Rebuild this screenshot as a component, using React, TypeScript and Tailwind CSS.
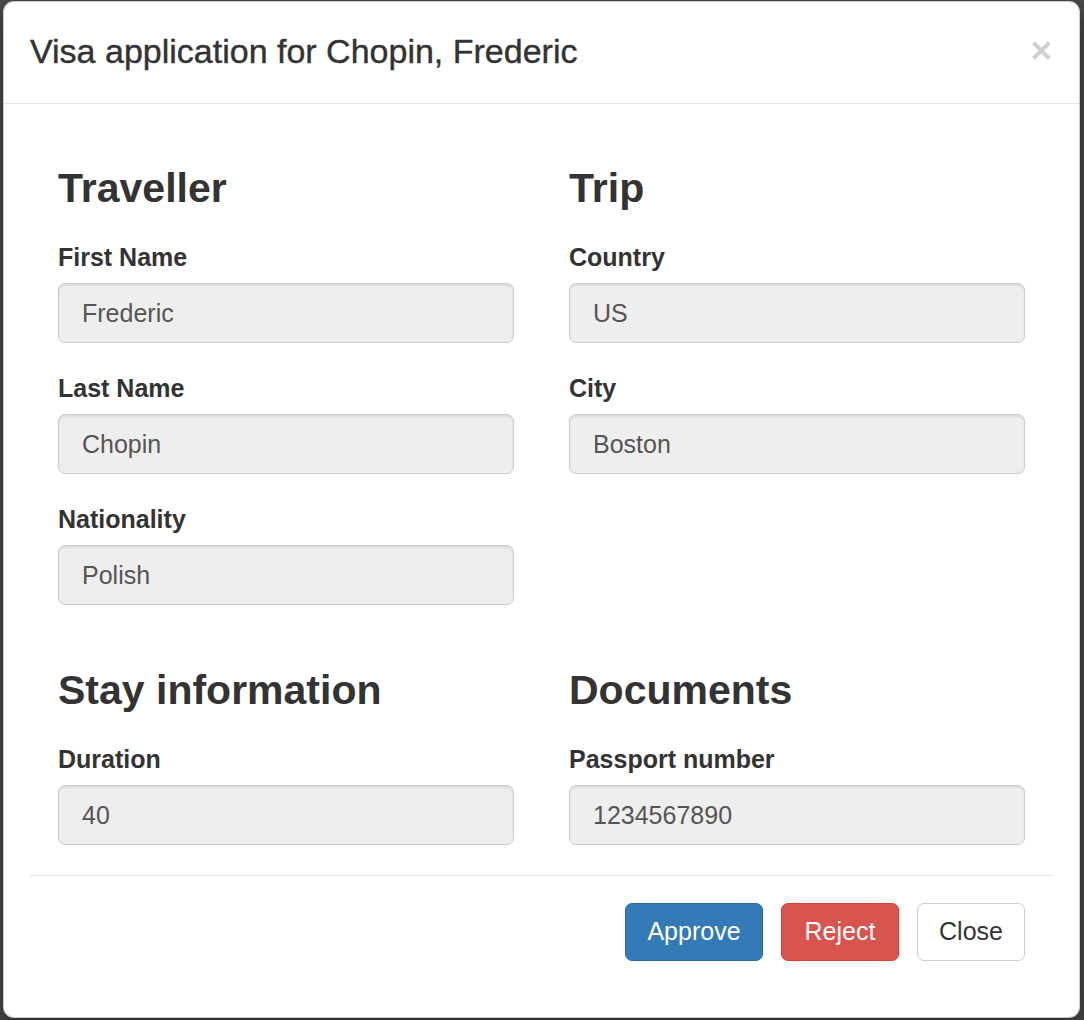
import React from 'react';

type Field = { label: string; value: string };

const sections: { title: string; fields: Field[] }[][] = [
  [
    {
      title: 'Traveller',
      fields: [
        { label: 'First Name', value: 'Frederic' },
        { label: 'Last Name', value: 'Chopin' },
        { label: 'Nationality', value: 'Polish' },
      ],
    },
    {
      title: 'Trip',
      fields: [
        { label: 'Country', value: 'US' },
        { label: 'City', value: 'Boston' },
      ],
    },
  ],
  [
    { title: 'Stay information', fields: [{ label: 'Duration', value: '40' }] },
    { title: 'Documents', fields: [{ label: 'Passport number', value: '1234567890' }] },
  ],
];

const FormField: React.FC<{ field: Field; last?: boolean }> = ({ field, last }) => (
  <div className={last ? 'mb-[30px]' : 'mb-[27px]'}>
    <label className="block mb-[8px] text-[25px] leading-[36px] font-bold text-[#333]">{field.label}</label>
    <input
      readOnly
      disabled
      value={field.value}
      className="block w-full h-[60px] pl-[23px] pr-[22px] text-[25px] text-[#555] bg-[#eee] border border-[#ccc] rounded-[7px] shadow-[inset_0_2px_2px_rgba(0,0,0,0.075)] outline-none"
    />
  </div>
);

const App: React.FC = () => {
  return (
    <div className="min-h-screen bg-[#4b4b4b] pt-[1px] pl-[3px] font-['Liberation_Sans',Arial,sans-serif]">
      <div className="w-[1077px] bg-white border border-black/20 rounded-[11px] shadow-[0_9px_27px_rgba(0,0,0,0.5)] overflow-hidden">
        {/* header */}
        <div className="flex items-start justify-between pt-[26px] pb-[29px] pl-[26px] pr-[27px] border-b border-[#e5e5e5]">
          <h4 className="text-[34px] leading-[46px] text-[#333] [-webkit-text-stroke:0.4px_#333]">
            Visa application for Chopin, Frederic
          </h4>
          <button className="text-[37px] leading-[46px] font-bold text-black/20">×</button>
        </div>

        {/* body */}
        <div className="px-[26px] pb-[27px]">
          <div className="px-[28px]">
            {sections.map((row, ri) => (
              <div key={ri} className={`grid grid-cols-2 gap-x-[55px] ${ri === 0 ? 'pt-[62px]' : 'pt-[36px]'}`}>
                {row.map((sec) => (
                  <div key={sec.title}>
                    <h3 className="text-[41px] leading-[45px] font-bold text-[#333] mb-[28px]">{sec.title}</h3>
                    {sec.fields.map((f, i) => (
                      <FormField key={f.label} field={f} last={ri === 1 && i === sec.fields.length - 1} />
                    ))}
                  </div>
                ))}
              </div>
            ))}
          </div>

          {/* footer */}
          <div className="flex justify-end gap-[18px] border-t border-[#e5e5e5] pt-[27px] pb-[29px] px-[28px]">
            <button className="w-[138px] h-[58px] text-[25px] text-white bg-[#337ab7] border border-[#2e6da4] rounded-[7px]">
              Approve
            </button>
            <button className="w-[118px] h-[58px] text-[25px] text-white bg-[#d9534f] border border-[#d43f3a] rounded-[7px]">
              Reject
            </button>
            <button className="w-[108px] h-[58px] text-[25px] text-[#333] bg-white border border-[#ccc] rounded-[7px]">
              Close
            </button>
          </div>
        </div>
      </div>
    </div>
  );
};

export default App;
